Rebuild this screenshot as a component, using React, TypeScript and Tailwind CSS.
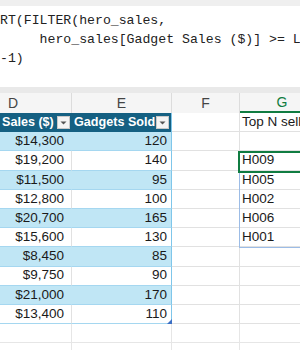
import React from 'react';

const rows = [
  { sales: '$14,300', sold: 120, top: '' },
  { sales: '$19,200', sold: 140, top: 'H009' },
  { sales: '$11,500', sold: 95, top: 'H005' },
  { sales: '$12,800', sold: 100, top: 'H002' },
  { sales: '$20,700', sold: 165, top: 'H006' },
  { sales: '$15,600', sold: 130, top: 'H001' },
  { sales: '$8,450', sold: 85, top: '' },
  { sales: '$9,750', sold: 90, top: '' },
  { sales: '$21,000', sold: 170, top: '' },
  { sales: '$13,400', sold: 110, top: '' },
];

const FilterButton = () => (
  <span className="ml-auto mr-[2px] flex h-[13px] w-[13px] shrink-0 items-center justify-center border border-[#c8c8c8] bg-[#f4f4f4]">
    <svg width="7" height="4" viewBox="0 0 7 4">
      <polygon points="0.5,0.5 6.5,0.5 3.5,3.5" fill="#555" />
    </svg>
  </span>
);

export default function App() {
  return (
    <div className="relative h-[350px] w-[300px] overflow-hidden bg-white font-['Liberation_Sans',Arial,sans-serif] text-[#1a1a1a]">
      {/* formula bar */}
      <div className="h-[6px] bg-[#efefef]" />
      <div className="h-[81px] overflow-hidden whitespace-pre bg-white pt-[5px] font-['Liberation_Mono',monospace] text-[13.2px] leading-[19px] text-[#222]">
        <div>RT(FILTER(hero_sales,</div>
        <div>     hero_sales[Gadget Sales ($)] &gt;= L</div>
        <div>-1)</div>
      </div>
      <div className="h-[6px] bg-[#e9e9e9]" />

      {/* column letters */}
      <div className="flex h-[20px] bg-[#f5f5f5] text-[14px] text-[#444]">
        <div className="flex w-[72px] shrink-0 items-center border-r border-[#dcdcdc] pl-[8px]">D</div>
        <div className="flex w-[100px] shrink-0 items-center justify-center border-r border-[#dcdcdc]">E</div>
        <div className="flex w-[68px] shrink-0 items-center justify-center border-r border-[#dcdcdc]">F</div>
        <div className="flex w-[84px] shrink-0 items-center justify-center border-b-2 border-[#107c41] text-[#107c41]">G</div>
      </div>

      {/* table header row */}
      <div className="flex h-[19.2px] text-[12.6px]">
        <div className="flex w-[72px] shrink-0 items-center bg-[#156082] pl-[2px] font-bold text-white">
          <span className="whitespace-nowrap">Sales ($)</span>
          <FilterButton />
        </div>
        <div className="flex w-[100px] shrink-0 items-center border-r border-[#7fc6ea] bg-[#156082] pl-[2px] font-bold text-white">
          <span className="whitespace-nowrap">Gadgets Sold</span>
          <FilterButton />
        </div>
        <div className="w-[68px] shrink-0 border-b border-r border-[#e1e1e1]" />
        <div className="flex w-[84px] shrink-0 items-center overflow-hidden whitespace-nowrap border-b border-[#e1e1e1] pl-[2px] text-[13.5px]">
          Top N sell
        </div>
      </div>

      {/* data rows */}
      {rows.map((r, i) => {
        const band = i % 2 === 0;
        return (
          <div key={i} className="flex h-[19.2px] text-[13.5px]">
            <div
              className={`flex w-[72px] shrink-0 items-center justify-end border-b border-r border-b-[#a5d7f0] pr-[7px] ${
                band ? 'border-r-[#c0e6f5] bg-[#c0e6f5]' : 'border-r-[#e1e1e1] bg-white'
              }`}
            >
              {r.sales}
            </div>
            <div
              className={`flex w-[100px] shrink-0 items-center justify-end border-b border-r border-b-[#a5d7f0] border-r-[#7fc6ea] pr-[4px] ${
                band ? 'bg-[#c0e6f5]' : 'bg-white'
              }`}
            >
              {r.sold}
            </div>
            <div className="w-[68px] shrink-0 border-b border-r border-[#e1e1e1]" />
            <div className="flex w-[84px] shrink-0 items-center border-b border-[#e1e1e1] pl-[2px]">{r.top}</div>
          </div>
        );
      })}

      {/* empty rows below the table */}
      {[0, 1].map((i) => (
        <div key={i} className="flex h-[19.2px]">
          <div className="w-[72px] shrink-0 border-b border-r border-[#e6e6e6]" />
          <div className="w-[100px] shrink-0 border-b border-r border-[#e6e6e6]" />
          <div className="w-[68px] shrink-0 border-b border-r border-[#e6e6e6]" />
          <div className="w-[84px] shrink-0 border-b border-[#e6e6e6]" />
        </div>
      ))}

      {/* table resize handle */}
      <svg className="absolute left-[167px] top-[319px]" width="5" height="5" viewBox="0 0 5 5">
        <polygon points="5,0 5,5 0,5" fill="#3b6fc4" />
      </svg>

      {/* spill range and active cell */}
      <div className="pointer-events-none absolute left-[239px] top-[151px] h-[97px] w-[100px] border border-[#9cbce6]" />
      <div className="pointer-events-none absolute left-[238px] top-[150.5px] h-[22px] w-[100px] border-2 border-[#107c41]" />
    </div>
  );
}
